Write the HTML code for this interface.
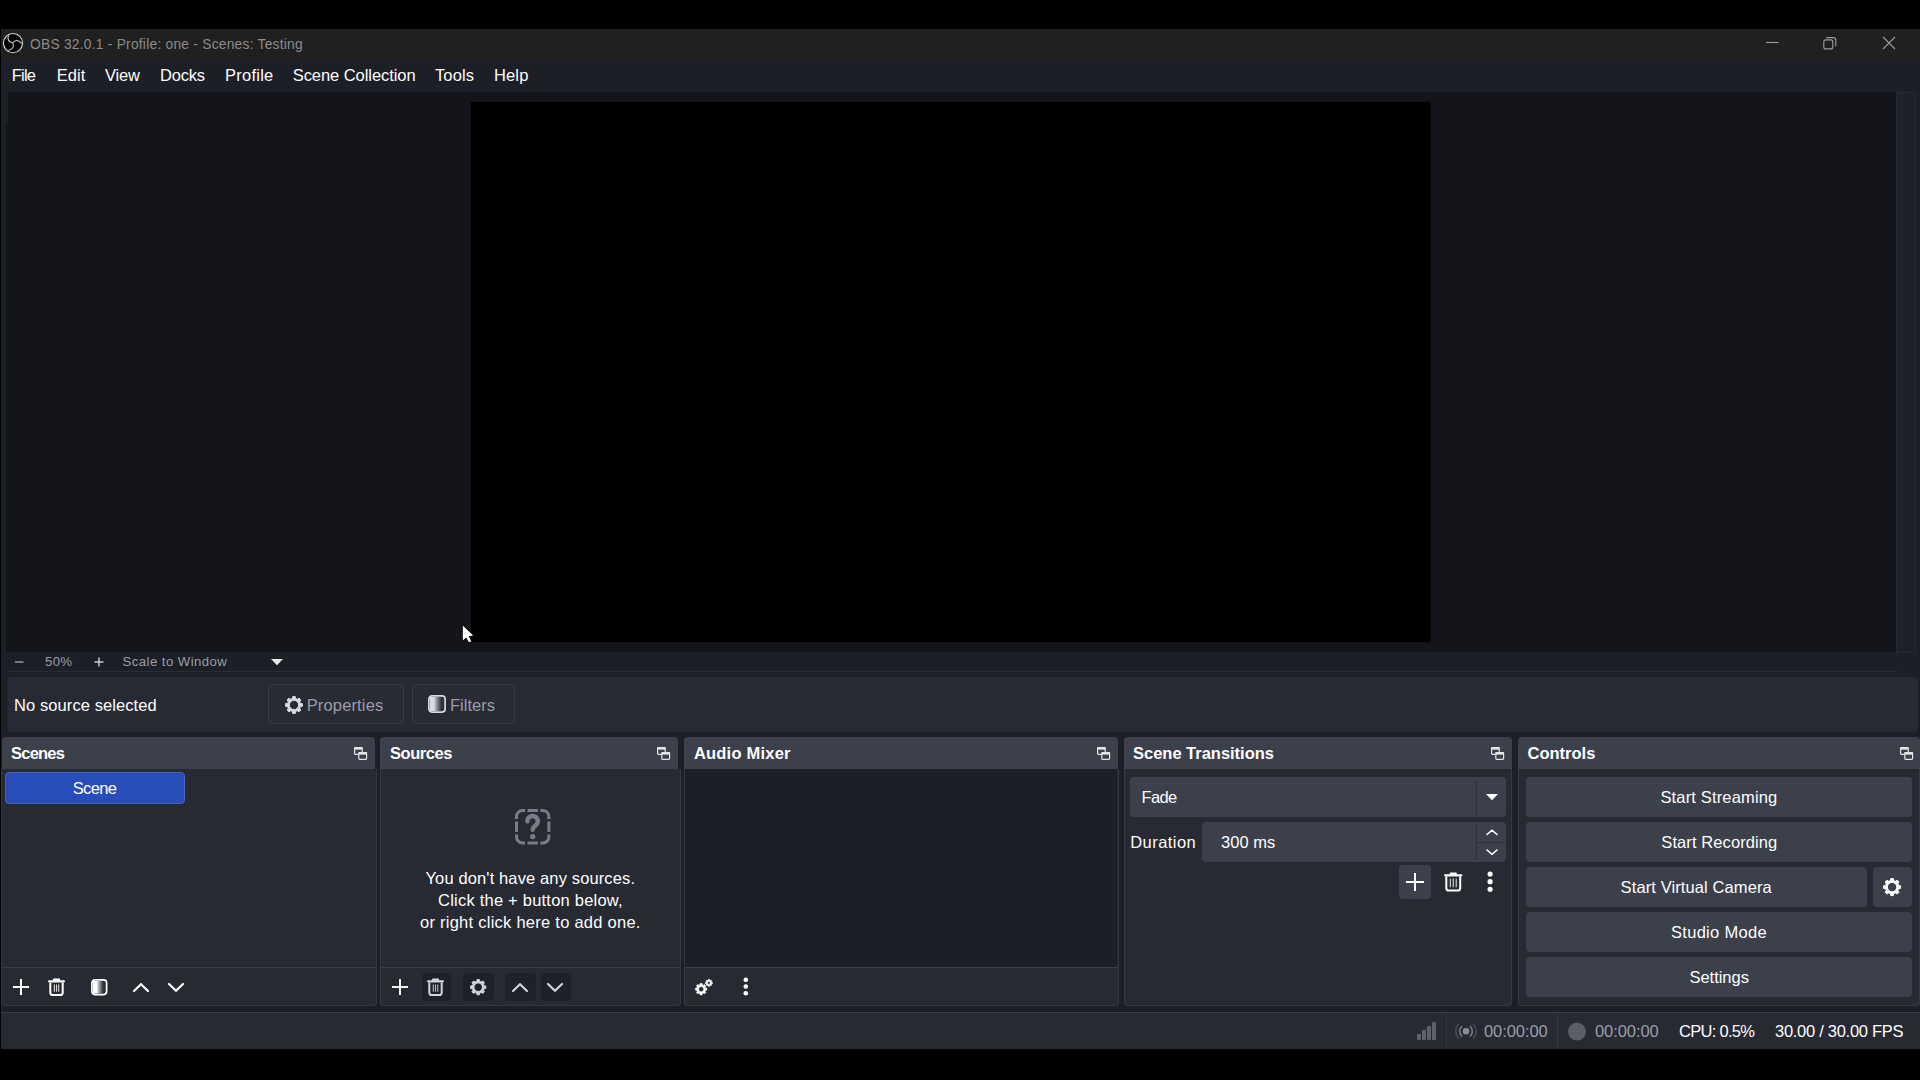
<!DOCTYPE html>
<html><head><meta charset="utf-8"><title>OBS</title>
<style>
*{margin:0;padding:0;box-sizing:border-box}
html,body{width:1920px;height:1080px;background:#000;overflow:hidden;font-family:"Liberation Sans",sans-serif}
.a{position:absolute}
.t{position:absolute;white-space:pre;line-height:20px;height:20px}
.win{left:1px;top:29px;width:1919px;height:1020px;background:#1d1f26}
.tb{left:1px;top:29px;width:1919px;height:31px;background:#202020}
.prev{left:6px;top:92px;width:1890px;height:560px;background:#14151a}
.canvas{left:471px;top:102px;width:960px;height:540px;background:#000}
.sbar{left:1896px;top:92px;width:20px;height:561px;background:#1e2027;border:1px solid #262932}
.zline{left:6px;top:671px;width:1892px;height:1px;background:#292c35}
.ctx{left:7px;top:677px;width:1911px;height:55px;background:#272a33;border-radius:4px}
.cbtn{top:684px;height:40px;background:#282b34;border:1px solid #383b46;border-radius:5px}
.dt{top:737px;height:32px;background:#3c404b;border-radius:4px 4px 0 0}
.db{top:769px;height:237px;background:#272a33;border:1px solid #353842;border-top:none;border-radius:0 0 4px 4px}
.sep{top:967px;height:1px;background:#3a3e49}
.btn{background:#3c404b;border-radius:4px}
.dis{background:#1f2128;border-radius:4px}
.status{left:1px;top:1012px;width:1919px;height:37px;background:#272a33;border-top:1px solid #3a3e49}
svg{position:absolute;overflow:visible}
</style></head><body>
<div class="a win"></div>
<div class="a tb"></div>
<div class="a prev"></div>
<div class="a" style="left:6px;top:92px;width:2px;height:30px;background:#1d1f26"></div>
<div class="a canvas"></div>
<div class="a sbar"></div>
<div class="a zline"></div>
<div class="a ctx"></div>
<div class="a cbtn" style="left:267.5px;width:136px"></div>
<div class="a cbtn" style="left:411.5px;width:103px"></div>

<!-- dock titles -->
<div class="a dt" style="left:2px;width:373px"></div>
<div class="a dt" style="left:380px;width:298px"></div>
<div class="a dt" style="left:684px;width:434px"></div>
<div class="a dt" style="left:1124px;width:388px"></div>
<div class="a dt" style="left:1518px;width:402px"></div>
<!-- dock bodies -->
<div class="a db" style="left:1px;width:376px"></div>
<div class="a db" style="left:380px;width:301px"></div>
<div class="a db" style="left:684px;width:435px"></div>
<div class="a db" style="left:1124px;width:388px"></div>
<div class="a db" style="left:1518px;width:402px"></div>
<!-- audio mixer dark -->
<div class="a" style="left:685px;top:769px;width:432px;height:198px;background:#1d1f26"></div>
<!-- toolbar separators -->
<div class="a sep" style="left:2px;width:374px"></div>
<div class="a sep" style="left:381px;width:299px"></div>
<div class="a sep" style="left:685px;width:433px"></div>

<!-- scene item -->
<div class="a" style="left:5px;top:772px;width:180px;height:32px;background:#284cb8;border:1px solid #4464c6;border-radius:4px"></div>

<!-- transitions widgets -->
<div class="a btn" style="left:1130px;top:777px;width:376px;height:40px"></div>
<div class="a" style="left:1476px;top:779px;width:1px;height:36px;background:#2d303a"></div>
<div class="a btn" style="left:1202px;top:822px;width:304px;height:40px"></div>
<div class="a" style="left:1476px;top:824px;width:1px;height:36px;background:#2d303a"></div>
<div class="a" style="left:1477px;top:842px;width:28px;height:1px;background:#2d303a"></div>
<div class="a btn" style="left:1399px;top:865px;width:32px;height:34px"></div>

<!-- controls buttons -->
<div class="a btn" style="left:1526px;top:777px;width:386px;height:40px"></div>
<div class="a btn" style="left:1526px;top:822px;width:386px;height:40px"></div>
<div class="a btn" style="left:1526px;top:867px;width:341px;height:40px"></div>
<div class="a btn" style="left:1873px;top:867px;width:39px;height:40px"></div>
<div class="a btn" style="left:1526px;top:912px;width:386px;height:40px"></div>
<div class="a btn" style="left:1526px;top:957px;width:386px;height:40px"></div>

<!-- disabled toolbar button bgs (sources) -->
<div class="a dis" style="left:422px;top:973px;width:29px;height:28px"></div>
<div class="a dis" style="left:463px;top:973px;width:31px;height:28px"></div>
<div class="a dis" style="left:505px;top:973px;width:31px;height:28px"></div>
<div class="a dis" style="left:541px;top:973px;width:30px;height:28px"></div>

<div class="a status"></div>
<div class="a" style="left:1446px;top:1014px;width:1px;height:34px;background:#33363f"></div>
<div class="a" style="left:1557px;top:1014px;width:1px;height:34px;background:#33363f"></div>

<svg style="left:1px;top:31px" width="24" height="24" viewBox="0 0 24 24" ><circle cx="12" cy="12.1" r="9.6" fill="#000" stroke="#d2d2d2" stroke-width="1.15"/><path d="M7.4,4.3 C6.2,8 8.2,10.9 11.9,12.1 M11.9,12.1 C13,9.6 16.6,7.6 20.4,12.2 M11.9,12.1 C13.2,15.6 11.6,18.6 7.6,19.2" stroke="#cccccc" stroke-width="1.1" fill="none" stroke-linecap="round"/></svg>
<svg style="left:1760px;top:30px" width="140" height="28" viewBox="0 0 140 28" ><path d="M6,12.5H18.5" stroke="#9c9c9c" stroke-width="1.1"/><rect x="63.8" y="9.9" width="9" height="9" rx="2" fill="none" stroke="#9c9c9c" stroke-width="1.1"/><path d="M66.3,7.6H73.3Q75.8,7.6 75.8,10.1V16.6" fill="none" stroke="#9c9c9c" stroke-width="1.1"/><path d="M123,7L135,19M135,7L123,19" stroke="#9c9c9c" stroke-width="1.1"/></svg>
<svg style="left:14px;top:656px" width="12" height="12" viewBox="0 0 12 12" ><path d="M1,6H9.5" stroke="#9a9da6" stroke-width="1.5"/></svg>
<svg style="left:94px;top:656px" width="12" height="12" viewBox="0 0 12 12" ><path d="M0.5,6H9.5M5,1.5V10.5" stroke="#c8cad0" stroke-width="1.5"/></svg>
<svg style="left:271.0px;top:659.0500000000001px" width="12" height="6.3" viewBox="0 0 12 6.3" ><path d="M0,0H12L6.0,6.3Z" fill="#e8e8e8"/></svg>
<svg style="left:284.0px;top:694.7px" width="20" height="20" viewBox="0 0 20 20" ><path d="M8.27,3.69 L8.67,1.60 L11.33,1.60 L11.73,3.69 L13.24,4.31 L15.00,3.12 L16.88,5.00 L15.69,6.76 L16.31,8.27 L18.40,8.67 L18.40,11.33 L16.31,11.73 L15.69,13.24 L16.88,15.00 L15.00,16.88 L13.24,15.69 L11.73,16.31 L11.33,18.40 L8.67,18.40 L8.27,16.31 L6.76,15.69 L5.00,16.88 L3.12,15.00 L4.31,13.24 L3.69,11.73 L1.60,11.33 L1.60,8.67 L3.69,8.27 L4.31,6.76 L3.12,5.00 L5.00,3.12 L6.76,4.31Z M14.64,10.00 A4.64,4.64 0 1 0 5.36,10.00 A4.64,4.64 0 1 0 14.64,10.00Z" fill="#d8dade" fill-rule="evenodd" stroke="#d8dade" stroke-width="1.0" stroke-linejoin="round"/></svg>
<svg style="left:428.0px;top:695.2px" width="18" height="18" viewBox="0 0 18 18" ><defs><linearGradient id="fg1" x1="0" x2="1" y1="0" y2="0"><stop offset="0" stop-color="#d8dade"/><stop offset="0.28" stop-color="#d8dade"/><stop offset="0.5" stop-color="#d8dade" stop-opacity="0.55"/><stop offset="0.8" stop-color="#d8dade" stop-opacity="0.05"/><stop offset="1" stop-color="#d8dade" stop-opacity="0"/></linearGradient></defs><rect x="2" y="2" width="14" height="14" fill="url(#fg1)"/><rect x="0.9" y="0.9" width="16.2" height="16.2" rx="3" fill="none" stroke="#d8dade" stroke-width="1.7"/></svg>
<svg style="left:354px;top:746.6px" width="14" height="14" viewBox="0 0 14 14" ><rect x="0.6" y="1.6" width="7.6" height="5.8" rx="0.8" fill="none" stroke="#e6e6e6" stroke-width="1.2"/><rect x="0" y="0" width="8.8" height="2.4" rx="0.8" fill="#e6e6e6"/><rect x="4.2" y="5" width="9" height="8" fill="#3c404b"/><rect x="4.8" y="6.6" width="7.8" height="5.8" rx="0.8" fill="none" stroke="#e6e6e6" stroke-width="1.2"/><rect x="4.2" y="5" width="9" height="2.4" rx="0.8" fill="#e6e6e6"/></svg>
<svg style="left:657px;top:746.6px" width="14" height="14" viewBox="0 0 14 14" ><rect x="0.6" y="1.6" width="7.6" height="5.8" rx="0.8" fill="none" stroke="#e6e6e6" stroke-width="1.2"/><rect x="0" y="0" width="8.8" height="2.4" rx="0.8" fill="#e6e6e6"/><rect x="4.2" y="5" width="9" height="8" fill="#3c404b"/><rect x="4.8" y="6.6" width="7.8" height="5.8" rx="0.8" fill="none" stroke="#e6e6e6" stroke-width="1.2"/><rect x="4.2" y="5" width="9" height="2.4" rx="0.8" fill="#e6e6e6"/></svg>
<svg style="left:1097px;top:746.6px" width="14" height="14" viewBox="0 0 14 14" ><rect x="0.6" y="1.6" width="7.6" height="5.8" rx="0.8" fill="none" stroke="#e6e6e6" stroke-width="1.2"/><rect x="0" y="0" width="8.8" height="2.4" rx="0.8" fill="#e6e6e6"/><rect x="4.2" y="5" width="9" height="8" fill="#3c404b"/><rect x="4.8" y="6.6" width="7.8" height="5.8" rx="0.8" fill="none" stroke="#e6e6e6" stroke-width="1.2"/><rect x="4.2" y="5" width="9" height="2.4" rx="0.8" fill="#e6e6e6"/></svg>
<svg style="left:1491px;top:746.6px" width="14" height="14" viewBox="0 0 14 14" ><rect x="0.6" y="1.6" width="7.6" height="5.8" rx="0.8" fill="none" stroke="#e6e6e6" stroke-width="1.2"/><rect x="0" y="0" width="8.8" height="2.4" rx="0.8" fill="#e6e6e6"/><rect x="4.2" y="5" width="9" height="8" fill="#3c404b"/><rect x="4.8" y="6.6" width="7.8" height="5.8" rx="0.8" fill="none" stroke="#e6e6e6" stroke-width="1.2"/><rect x="4.2" y="5" width="9" height="2.4" rx="0.8" fill="#e6e6e6"/></svg>
<svg style="left:1900px;top:746.6px" width="14" height="14" viewBox="0 0 14 14" ><rect x="0.6" y="1.6" width="7.6" height="5.8" rx="0.8" fill="none" stroke="#e6e6e6" stroke-width="1.2"/><rect x="0" y="0" width="8.8" height="2.4" rx="0.8" fill="#e6e6e6"/><rect x="4.2" y="5" width="9" height="8" fill="#3c404b"/><rect x="4.8" y="6.6" width="7.8" height="5.8" rx="0.8" fill="none" stroke="#e6e6e6" stroke-width="1.2"/><rect x="4.2" y="5" width="9" height="2.4" rx="0.8" fill="#e6e6e6"/></svg>
<svg style="left:13.0px;top:979.0px" width="16" height="16" viewBox="0 0 16 16" ><path d="M8.0,0V16M0,8.0H16" stroke="#fefefe" stroke-width="2" fill="none"/></svg>
<svg style="left:48.1px;top:978.0px" width="17" height="18" viewBox="0 0 17 18" ><path d="M1.1,3.3H15.9" stroke="#fefefe" stroke-width="2.2" stroke-linecap="round"/><rect x="4.9" y="0.6" width="7.2" height="2.4" rx="1" fill="#fefefe"/><path d="M2.3,4.4 V14.4 Q2.3,17 4.9,17 H12.1 Q14.7,17 14.7,14.4 V4.4" stroke="#fefefe" stroke-width="2" fill="none"/><path d="M6.3,6.6V13.8M8.5,6.6V13.8M10.7,6.6V13.8" stroke="#fefefe" stroke-width="1.1" opacity="0.85"/></svg>
<svg style="left:90.75px;top:978.75px" width="16.5" height="16.5" viewBox="0 0 16.5 16.5" ><defs><linearGradient id="fg2" x1="0" x2="1" y1="0" y2="0"><stop offset="0" stop-color="#fefefe"/><stop offset="0.28" stop-color="#fefefe"/><stop offset="0.5" stop-color="#fefefe" stop-opacity="0.55"/><stop offset="0.8" stop-color="#fefefe" stop-opacity="0.05"/><stop offset="1" stop-color="#fefefe" stop-opacity="0"/></linearGradient></defs><rect x="2" y="2" width="12.5" height="12.5" fill="url(#fg2)"/><rect x="0.9" y="0.9" width="14.7" height="14.7" rx="3" fill="none" stroke="#fefefe" stroke-width="1.7"/></svg>
<svg style="left:133.0px;top:982.7px" width="16" height="9" viewBox="0 0 16 9" ><path d="M1,8 L8.0,1.2 L15,8" stroke="#fefefe" stroke-width="2.2" fill="none" stroke-linecap="round" stroke-linejoin="miter"/></svg>
<svg style="left:168.0px;top:982.7px" width="16" height="9" viewBox="0 0 16 9" ><path d="M1,1 L8.0,7.8 L15,1" stroke="#fefefe" stroke-width="2.2" fill="none" stroke-linecap="round" stroke-linejoin="miter"/></svg>
<svg style="left:392.0px;top:979.0px" width="16" height="16" viewBox="0 0 16 16" ><path d="M8.0,0V16M0,8.0H16" stroke="#fefefe" stroke-width="2" fill="none"/></svg>
<svg style="left:427.1px;top:978.0px" width="17" height="18" viewBox="0 0 17 18" ><path d="M1.1,3.3H15.9" stroke="#d2d4d8" stroke-width="2.2" stroke-linecap="round"/><rect x="4.9" y="0.6" width="7.2" height="2.4" rx="1" fill="#d2d4d8"/><path d="M2.3,4.4 V14.4 Q2.3,17 4.9,17 H12.1 Q14.7,17 14.7,14.4 V4.4" stroke="#d2d4d8" stroke-width="2" fill="none"/><path d="M6.3,6.6V13.8M8.5,6.6V13.8M10.7,6.6V13.8" stroke="#d2d4d8" stroke-width="1.1" opacity="0.85"/></svg>
<svg style="left:468.8px;top:977.8px" width="18.4" height="18.4" viewBox="0 0 18.4 18.4" ><path d="M7.64,3.48 L8.00,1.59 L10.40,1.59 L10.76,3.48 L12.14,4.05 L13.73,2.97 L15.43,4.67 L14.35,6.26 L14.92,7.64 L16.81,8.00 L16.81,10.40 L14.92,10.76 L14.35,12.14 L15.43,13.73 L13.73,15.43 L12.14,14.35 L10.76,14.92 L10.40,16.81 L8.00,16.81 L7.64,14.92 L6.26,14.35 L4.67,15.43 L2.97,13.73 L4.05,12.14 L3.48,10.76 L1.59,10.40 L1.59,8.00 L3.48,7.64 L4.05,6.26 L2.97,4.67 L4.67,2.97 L6.26,4.05Z M13.47,9.20 A4.27,4.27 0 1 0 4.93,9.20 A4.27,4.27 0 1 0 13.47,9.20Z" fill="#d2d4d8" fill-rule="evenodd" stroke="#d2d4d8" stroke-width="1.0" stroke-linejoin="round"/></svg>
<svg style="left:512.0px;top:982.7px" width="16" height="9" viewBox="0 0 16 9" ><path d="M1,8 L8.0,1.2 L15,8" stroke="#d2d4d8" stroke-width="2.2" fill="none" stroke-linecap="round" stroke-linejoin="miter"/></svg>
<svg style="left:547.0px;top:982.7px" width="16" height="9" viewBox="0 0 16 9" ><path d="M1,1 L8.0,7.8 L15,1" stroke="#d2d4d8" stroke-width="2.2" fill="none" stroke-linecap="round" stroke-linejoin="miter"/></svg>
<svg style="left:693.65px;top:981.65px" width="14.3" height="14.3" viewBox="0 0 14.3 14.3" ><path d="M5.97,2.84 L6.24,1.42 L8.06,1.42 L8.33,2.84 L9.36,3.27 L10.56,2.46 L11.84,3.74 L11.03,4.94 L11.46,5.97 L12.88,6.24 L12.88,8.06 L11.46,8.33 L11.03,9.36 L11.84,10.56 L10.56,11.84 L9.36,11.03 L8.33,11.46 L8.06,12.88 L6.24,12.88 L5.97,11.46 L4.94,11.03 L3.74,11.84 L2.46,10.56 L3.27,9.36 L2.84,8.33 L1.42,8.06 L1.42,6.24 L2.84,5.97 L3.27,4.94 L2.46,3.74 L3.74,2.46 L4.94,3.27Z M9.71,7.15 A2.56,2.56 0 1 0 4.59,7.15 A2.56,2.56 0 1 0 9.71,7.15Z" fill="#fefefe" fill-rule="evenodd" stroke="#fefefe" stroke-width="0.7" stroke-linejoin="round"/></svg>
<svg style="left:703.8px;top:977.4px" width="11" height="11" viewBox="0 0 11 11" ><circle cx="5.5" cy="5.5" r="4.8" fill="#272a33"/></svg>
<svg style="left:704.4px;top:978.0px" width="9.8" height="9.8" viewBox="0 0 9.8 9.8" ><path d="M4.16,2.19 L4.33,1.29 L5.47,1.29 L5.64,2.19 L6.29,2.46 L7.05,1.95 L7.85,2.75 L7.34,3.51 L7.61,4.16 L8.51,4.33 L8.51,5.47 L7.61,5.64 L7.34,6.29 L7.85,7.05 L7.05,7.85 L6.29,7.34 L5.64,7.61 L5.47,8.51 L4.33,8.51 L4.16,7.61 L3.51,7.34 L2.75,7.85 L1.95,7.05 L2.46,6.29 L2.19,5.64 L1.29,5.47 L1.29,4.33 L2.19,4.16 L2.46,3.51 L1.95,2.75 L2.75,1.95 L3.51,2.46Z M6.32,4.90 A1.42,1.42 0 1 0 3.48,4.90 A1.42,1.42 0 1 0 6.32,4.90Z" fill="#fefefe" fill-rule="evenodd" stroke="#fefefe" stroke-width="0.5" stroke-linejoin="round"/></svg>
<svg style="left:743.2px;top:977.45px" width="5.6" height="19.1" viewBox="0 0 5.6 19.1" ><circle cx="2.8" cy="2.8000000000000007" r="2.3" fill="#fefefe"/><circle cx="2.8" cy="9.55" r="2.3" fill="#fefefe"/><circle cx="2.8" cy="16.3" r="2.3" fill="#fefefe"/></svg>
<svg style="left:1485.6px;top:794.0500000000001px" width="12" height="6.3" viewBox="0 0 12 6.3" ><path d="M0,0H12L6.0,6.3Z" fill="#fefefe"/></svg>
<svg style="left:1485.6px;top:828.75px" width="12" height="6.5" viewBox="0 0 12 6.5" ><path d="M1,5.5 L6.0,1.2 L11,5.5" stroke="#fefefe" stroke-width="1.6" fill="none" stroke-linecap="round" stroke-linejoin="miter"/></svg>
<svg style="left:1485.6px;top:848.75px" width="12" height="6.5" viewBox="0 0 12 6.5" ><path d="M1,1 L6.0,5.3 L11,1" stroke="#fefefe" stroke-width="1.6" fill="none" stroke-linecap="round" stroke-linejoin="miter"/></svg>
<svg style="left:1406.0px;top:873.0px" width="18" height="18" viewBox="0 0 18 18" ><path d="M9.0,0V18M0,9.0H18" stroke="#fefefe" stroke-width="2" fill="none"/></svg>
<svg style="left:1443.55px;top:872.25px" width="18.5" height="19.5" viewBox="0 0 18.5 19.5" ><path d="M1.1,3.3H17.4" stroke="#fefefe" stroke-width="2.2" stroke-linecap="round"/><rect x="5.65" y="0.6" width="7.2" height="2.4" rx="1" fill="#fefefe"/><path d="M2.3,4.4 V15.9 Q2.3,18.5 4.9,18.5 H13.6 Q16.2,18.5 16.2,15.9 V4.4" stroke="#fefefe" stroke-width="2" fill="none"/><path d="M6.3,6.6V15.3M9.25,6.6V15.3M12.2,6.6V15.3" stroke="#fefefe" stroke-width="1.1" opacity="0.85"/></svg>
<svg style="left:1486.9px;top:871.3px" width="6.2" height="21.4" viewBox="0 0 6.2 21.4" ><circle cx="3.1" cy="3.0999999999999996" r="2.6" fill="#fefefe"/><circle cx="3.1" cy="10.7" r="2.6" fill="#fefefe"/><circle cx="3.1" cy="18.299999999999997" r="2.6" fill="#fefefe"/></svg>
<svg style="left:1881.8px;top:877.0px" width="20.2" height="20.2" viewBox="0 0 20.2 20.2" ><path d="M8.35,3.71 L8.75,1.61 L11.45,1.61 L11.85,3.71 L13.38,4.35 L15.15,3.14 L17.06,5.05 L15.85,6.82 L16.49,8.35 L18.59,8.75 L18.59,11.45 L16.49,11.85 L15.85,13.38 L17.06,15.15 L15.15,17.06 L13.38,15.85 L11.85,16.49 L11.45,18.59 L8.75,18.59 L8.35,16.49 L6.82,15.85 L5.05,17.06 L3.14,15.15 L4.35,13.38 L3.71,11.85 L1.61,11.45 L1.61,8.75 L3.71,8.35 L4.35,6.82 L3.14,5.05 L5.05,3.14 L6.82,4.35Z M14.79,10.10 A4.69,4.69 0 1 0 5.41,10.10 A4.69,4.69 0 1 0 14.79,10.10Z" fill="#fefefe" fill-rule="evenodd" stroke="#fefefe" stroke-width="1.0" stroke-linejoin="round"/></svg>
<svg style="left:514.75px;top:809px" width="35.4" height="35.4" viewBox="0 0 35.4 35.4" ><path d="M1.50,10.00 L1.50,7.50 A6,6 0 0 1 7.50,1.50 L10.00,1.50 M1.50,25.40 L1.50,27.90 A6,6 0 0 0 7.50,33.90 L10.00,33.90 M33.90,10.00 L33.90,7.50 A6,6 0 0 0 27.90,1.50 L25.40,1.50 M33.90,25.40 L33.90,27.90 A6,6 0 0 1 27.90,33.90 L25.40,33.90 M12.5,1.5H22.9 M12.5,33.9H22.9 M1.5,12.5V22.9 M33.9,12.5V22.9" stroke="#797c86" stroke-width="3" fill="none"/><path d="M12.4,12.4 A5.2,5.2 0 1 1 20.6,16.4 C18.6,17.8 17.7,18.7 17.7,20.8" stroke="#797c86" stroke-width="4.4" fill="none" stroke-linecap="round"/><circle cx="17.7" cy="27.6" r="2.7" fill="#797c86"/></svg>
<svg style="left:1416px;top:1020px" width="22" height="22" viewBox="0 0 22 22" ><rect x="1" y="14" width="4" height="6" rx="1" fill="#5e6169"/><rect x="6" y="10" width="4" height="10" rx="1" fill="#5e6169"/><rect x="11" y="6" width="4" height="14" rx="1" fill="#5e6169"/><rect x="16" y="2" width="4" height="18" rx="1" fill="#5e6169"/></svg>
<svg style="left:1454px;top:1020px" width="24" height="24" viewBox="0 0 24 24" ><circle cx="12" cy="11.2" r="3.3" fill="#8a8d95"/><path d="M7.6,6.6 A6.4,6.4 0 0 0 7.6,15.8 M16.4,6.6 A6.4,6.4 0 0 1 16.4,15.8" stroke="#6f727a" stroke-width="1.8" fill="none" stroke-linecap="round"/><path d="M4.6,4.2 A10,10 0 0 0 4.6,18.2 M19.4,4.2 A10,10 0 0 1 19.4,18.2" stroke="#494c55" stroke-width="1.6" fill="none" stroke-linecap="round"/></svg>
<svg style="left:1567px;top:1021.5px" width="20" height="20" viewBox="0 0 20 20" ><circle cx="10" cy="9.6" r="9" fill="#5b5e62"/></svg>
<svg style="left:460px;top:623px" width="16" height="22" viewBox="0 0 16 22" ><path d="M2.8,2.6 L2.8,17.4 L6.2,14.4 L8.9,19.3 L11.3,18.4 L8.8,13.2 L13.2,12.6 Z" fill="#fff" stroke="#000" stroke-width="1.8" stroke-linejoin="round" paint-order="stroke"/></svg>
<span class="t" style="left:30.00px;top:34.62px;font-size:13.8px;letter-spacing:0.234px;color:#8b8b8b;">OBS 32.0.1 - Profile: one - Scenes: Testing</span>
<span class="t" style="left:11.70px;top:65.08px;font-size:16.5px;letter-spacing:-0.755px;color:#fefefe;">File</span>
<span class="t" style="left:56.70px;top:65.08px;font-size:16.5px;letter-spacing:0.046px;color:#fefefe;">Edit</span>
<span class="t" style="left:105.00px;top:65.08px;font-size:16.5px;letter-spacing:-0.158px;color:#fefefe;">View</span>
<span class="t" style="left:160.00px;top:65.08px;font-size:16.5px;letter-spacing:-0.218px;color:#fefefe;">Docks</span>
<span class="t" style="left:225.00px;top:65.08px;font-size:16.5px;letter-spacing:0.254px;color:#fefefe;">Profile</span>
<span class="t" style="left:292.70px;top:65.08px;font-size:16.5px;letter-spacing:-0.056px;color:#fefefe;">Scene Collection</span>
<span class="t" style="left:435.00px;top:65.08px;font-size:16.5px;letter-spacing:0.118px;color:#fefefe;">Tools</span>
<span class="t" style="left:494.00px;top:65.08px;font-size:16.5px;letter-spacing:0.131px;color:#fefefe;">Help</span>
<span class="t" style="left:45.00px;top:651.73px;font-size:13.2px;letter-spacing:0.300px;color:#9a9da6;">50%</span>
<span class="t" style="left:122.50px;top:651.73px;font-size:13.2px;letter-spacing:0.440px;color:#9a9da6;">Scale to Window</span>
<span class="t" style="left:14.00px;top:695.08px;font-size:16.5px;letter-spacing:0.086px;color:#fefefe;">No source selected</span>
<span class="t" style="left:306.70px;top:694.98px;font-size:16.5px;letter-spacing:0.151px;color:#9a9da6;">Properties</span>
<span class="t" style="left:450.00px;top:694.98px;font-size:16.5px;letter-spacing:0.020px;color:#9a9da6;">Filters</span>
<span class="t" style="left:11.00px;top:743.28px;font-size:16.5px;letter-spacing:-0.767px;color:#fefefe;font-weight:bold;">Scenes</span>
<span class="t" style="left:390.00px;top:743.28px;font-size:16.5px;letter-spacing:-0.432px;color:#fefefe;font-weight:bold;">Sources</span>
<span class="t" style="left:693.90px;top:743.28px;font-size:16.5px;letter-spacing:0.214px;color:#fefefe;font-weight:bold;">Audio Mixer</span>
<span class="t" style="left:1133.00px;top:743.28px;font-size:16.5px;letter-spacing:-0.015px;color:#fefefe;font-weight:bold;">Scene Transitions</span>
<span class="t" style="left:1527.50px;top:743.28px;font-size:16.5px;letter-spacing:-0.002px;color:#fefefe;font-weight:bold;">Controls</span>
<span class="t" style="left:72.75px;top:778.03px;font-size:16.5px;letter-spacing:-0.657px;color:#fefefe;">Scene</span>
<span class="t" style="left:425.50px;top:868.08px;font-size:16.5px;letter-spacing:0.128px;color:#fefefe;">You don't have any sources.</span>
<span class="t" style="left:438.00px;top:890.28px;font-size:16.5px;letter-spacing:0.223px;color:#fefefe;">Click the + button below,</span>
<span class="t" style="left:420.00px;top:912.48px;font-size:16.5px;letter-spacing:0.254px;color:#fefefe;">or right click here to add one.</span>
<span class="t" style="left:1141.60px;top:787.08px;font-size:16.5px;letter-spacing:-0.673px;color:#fefefe;">Fade</span>
<span class="t" style="left:1130.20px;top:831.88px;font-size:16.5px;letter-spacing:0.461px;color:#fefefe;">Duration</span>
<span class="t" style="left:1221.00px;top:831.88px;font-size:16.5px;letter-spacing:0.036px;color:#fefefe;">300 ms</span>
<span class="t" style="left:1660.40px;top:787.28px;font-size:16.5px;letter-spacing:0.159px;color:#fefefe;">Start Streaming</span>
<span class="t" style="left:1661.30px;top:832.28px;font-size:16.5px;letter-spacing:0.095px;color:#fefefe;">Start Recording</span>
<span class="t" style="left:1620.60px;top:877.28px;font-size:16.5px;letter-spacing:0.103px;color:#fefefe;">Start Virtual Camera</span>
<span class="t" style="left:1671.00px;top:922.28px;font-size:16.5px;letter-spacing:0.295px;color:#fefefe;">Studio Mode</span>
<span class="t" style="left:1689.40px;top:967.28px;font-size:16.5px;letter-spacing:-0.007px;color:#fefefe;">Settings</span>
<span class="t" style="left:1484.00px;top:1021.28px;font-size:16.5px;letter-spacing:-0.081px;color:#9a9da6;">00:00:00</span>
<span class="t" style="left:1595.00px;top:1021.28px;font-size:16.5px;letter-spacing:-0.067px;color:#9a9da6;">00:00:00</span>
<span class="t" style="left:1679.00px;top:1021.28px;font-size:16.5px;letter-spacing:-0.699px;color:#fefefe;">CPU: 0.5%</span>
<span class="t" style="left:1775.00px;top:1021.28px;font-size:16.5px;letter-spacing:-0.281px;color:#fefefe;">30.00 / 30.00 FPS</span>
</body></html>
